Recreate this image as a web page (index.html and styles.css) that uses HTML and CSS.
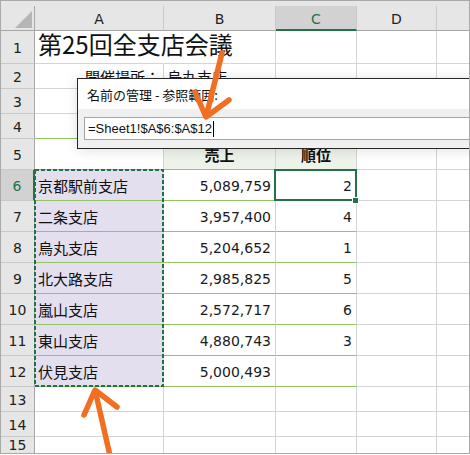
FILE: index.html
```html
<!DOCTYPE html>
<html lang="ja">
<head>
<meta charset="utf-8">
<title>名前の管理</title>
<link rel="stylesheet" href="styles.css">
</head>
<body>
<div class="sheet">
  <div class="topstrip"></div>
  <div class="grid">
    <div class="corner"><span class="tri"></span></div>
    <div class="ch">A</div>
    <div class="ch">B</div>
    <div class="ch sel">C</div>
    <div class="ch">D</div>
    <div class="ch last"></div>

    <div class="rh">1</div>
    <div class="c title jp over">第25回全支店会議</div>
    <div class="c"></div><div class="c"></div><div class="c"></div><div class="c last"></div>

    <div class="rh">2</div>
    <div class="c jp r">開催場所：</div>
    <div class="c jp">烏丸支店</div>
    <div class="c"></div><div class="c"></div><div class="c last"></div>

    <div class="rh">3</div>
    <div class="c"></div><div class="c"></div><div class="c"></div><div class="c"></div><div class="c last"></div>

    <div class="rh">4</div>
    <div class="c g"></div><div class="c g"></div><div class="c g"></div><div class="c"></div><div class="c last"></div>

    <div class="rh">5</div>
    <div class="c g"></div>
    <div class="c g hd jp">売上</div>
    <div class="c g hd jp">順位</div>
    <div class="c"></div><div class="c last"></div>

    <div class="rh rsel">6</div>
    <div class="c g lav jp">京都駅前支店</div>
    <div class="c g num">5,089,759</div>
    <div class="c g num">2</div>
    <div class="c"></div><div class="c last"></div>

    <div class="rh">7</div>
    <div class="c g lav jp">二条支店</div>
    <div class="c g num">3,957,400</div>
    <div class="c g num">4</div>
    <div class="c"></div><div class="c last"></div>

    <div class="rh">8</div>
    <div class="c g lav jp">烏丸支店</div>
    <div class="c g num">5,204,652</div>
    <div class="c g num">1</div>
    <div class="c"></div><div class="c last"></div>

    <div class="rh">9</div>
    <div class="c g lav jp">北大路支店</div>
    <div class="c g num">2,985,825</div>
    <div class="c g num">5</div>
    <div class="c"></div><div class="c last"></div>

    <div class="rh">10</div>
    <div class="c g lav jp">嵐山支店</div>
    <div class="c g num">2,572,717</div>
    <div class="c g num">6</div>
    <div class="c"></div><div class="c last"></div>

    <div class="rh">11</div>
    <div class="c g lav jp">東山支店</div>
    <div class="c g num">4,880,743</div>
    <div class="c g num">3</div>
    <div class="c"></div><div class="c last"></div>

    <div class="rh">12</div>
    <div class="c g lav jp">伏見支店</div>
    <div class="c g num">5,000,493</div>
    <div class="c g"></div>
    <div class="c"></div><div class="c last"></div>

    <div class="rh">13</div>
    <div class="c"></div><div class="c"></div><div class="c"></div><div class="c"></div><div class="c last"></div>

    <div class="rh">14</div>
    <div class="c"></div><div class="c"></div><div class="c"></div><div class="c"></div><div class="c last"></div>

    <div class="rh end">15</div>
    <div class="c end"></div><div class="c end"></div><div class="c end"></div><div class="c end"></div><div class="c last end"></div>
  </div>

  <svg class="marquee" width="470" height="455" viewBox="0 0 470 455">
    <rect x="35" y="170" width="128" height="216" fill="none" stroke="#217346" stroke-width="2" stroke-dasharray="4 2"/>
  </svg>

  <div class="selbox"></div>
  <div class="handle"></div>

  <div class="dialog">
    <div class="dtitle">名前の管理 - 参照範囲:</div>
    <div class="dbody">
      <div class="dinput"><span class="itext">=Sheet1!$A$6:$A$12</span><span class="caret"></span></div>
    </div>
  </div>

  <svg class="arrows" width="470" height="455" viewBox="0 0 470 455">
    <g fill="none" stroke="#f26e22" stroke-width="5.5" stroke-linecap="round" stroke-linejoin="round">
      <path d="M222 53 L206.5 115"/>
      <path d="M195 92 L206 117 L229 100"/>
      <path d="M111 460 L95.5 392"/>
      <path d="M84 415 L95 390 L117 407"/>
    </g>
  </svg>
</div>
</body>
</html>
```

FILE: styles.css
```css
html, body {
  margin: 0;
  padding: 0;
  background: #ffffff;
}

.sheet {
  position: relative;
  width: 470px;
  height: 454px;
  box-sizing: border-box;
  border: 1px solid #a9a9a9;
  overflow: hidden;
  background: #ffffff;
  font-family: "DejaVu Sans", "Noto Sans CJK JP", sans-serif;
  color: #1a1a1a;
}

.topstrip {
  height: 5px;
  background: #e6e6e6;
}

.grid {
  display: grid;
  grid-template-columns: 34px 129px 112px 81px 80px 32px;
  grid-template-rows: 25px 33px 25px 25px 25px 31px 31px 31px 31px 31px 31px 31px 31px 25px 25px 16px;
}

.grid > div {
  box-sizing: border-box;
  min-width: 0;
}

.corner {
  position: relative;
  background: #e6e6e6;
  border-right: 1px solid #a6a6a6;
  border-bottom: 1px solid #a6a6a6;
}

.tri {
  position: absolute;
  right: 2px;
  bottom: 2px;
  width: 0;
  height: 0;
  border-left: 17px solid transparent;
  border-bottom: 17px solid #b6b6b6;
}

.ch {
  background: #e6e6e6;
  border-right: 1px solid #c9c9c9;
  border-bottom: 1px solid #a6a6a6;
  display: flex;
  align-items: center;
  justify-content: center;
  font-size: 14px;
  color: #222;
  padding-top: 1px;
}

.ch.last { border-right: none; }

.ch.sel {
  background: #d2d2d2;
  color: #217346;
  border-bottom: 2px solid #217346;
  padding-top: 2px;
}

.rh {
  background: #e6e6e6;
  border-right: 1px solid #a6a6a6;
  border-bottom: 1px solid #c9c9c9;
  display: flex;
  align-items: center;
  justify-content: center;
  font-size: 14px;
  color: #222;
  padding-top: 2px;
}

.rh.rsel {
  background: #d2d2d2;
  color: #217346;
  border-right: 2px solid #217346;
}

.c {
  border-right: 1px solid #d4d4d4;
  border-bottom: 1px solid #d4d4d4;
  display: flex;
  align-items: center;
  padding: 0 3px;
  white-space: nowrap;
  overflow: hidden;
  line-height: 1;
}

.c.last { border-right: none; }

.grid > .end {
  border-bottom: none;
  padding-top: 0;
}

.c.g { border-bottom-color: #92c45f; }

.c.lav { background: #e4dfef; }

.jp {
  font-family: "Noto Sans CJK JP", sans-serif;
  font-size: 15px;
  color: #111;
}

.c.r { justify-content: flex-end; }

.c.title {
  font-size: 24px;
  padding-bottom: 7px;
  overflow: visible;
  border-right-color: transparent;
  position: relative;
  z-index: 1;
}

.c.hd {
  justify-content: center;
  font-weight: bold;
  background: #edf3e8;
}

.c.num {
  justify-content: flex-end;
  font-size: 14px;
  padding-right: 4px;
  padding-top: 1px;
}

.marquee {
  position: absolute;
  left: -1px;
  top: -1px;
  z-index: 2;
}

.selbox {
  position: absolute;
  left: 273px;
  top: 168px;
  width: 83px;
  height: 32px;
  box-sizing: border-box;
  border: 2px solid #217346;
  z-index: 3;
}

.handle {
  position: absolute;
  left: 351px;
  top: 196px;
  width: 7px;
  height: 7px;
  box-sizing: border-box;
  background: #217346;
  border: 1px solid #ffffff;
  z-index: 4;
}

.dialog {
  position: absolute;
  left: 76px;
  top: 77px;
  width: 430px;
  height: 71px;
  box-sizing: border-box;
  border: 1px solid #262626;
  background: #f0f0f0;
  box-shadow: 0 1px 12px rgba(0, 0, 0, 0.13);
  z-index: 5;
  display: flex;
  flex-direction: column;
}

.dtitle {
  height: 30px;
  background: #ffffff;
  display: flex;
  align-items: center;
  padding-left: 9px;
  font-family: "Noto Sans CJK JP", sans-serif;
  font-size: 13px;
  color: #111;
  line-height: 1;
}

.dbody {
  flex: 1;
  padding: 8px 0 0 6px;
}

.dinput {
  height: 23px;
  box-sizing: border-box;
  border: 1px solid #a5a5a5;
  background: #ffffff;
  display: flex;
  align-items: center;
  padding-left: 3px;
}

.itext {
  font-family: "Liberation Sans", sans-serif;
  font-size: 13px;
  color: #111;
  line-height: 1;
}

.caret {
  display: block;
  width: 1px;
  height: 16px;
  background: #000;
  margin-left: 1px;
}

.arrows {
  position: absolute;
  left: -1px;
  top: -1px;
  z-index: 10;
}
```
